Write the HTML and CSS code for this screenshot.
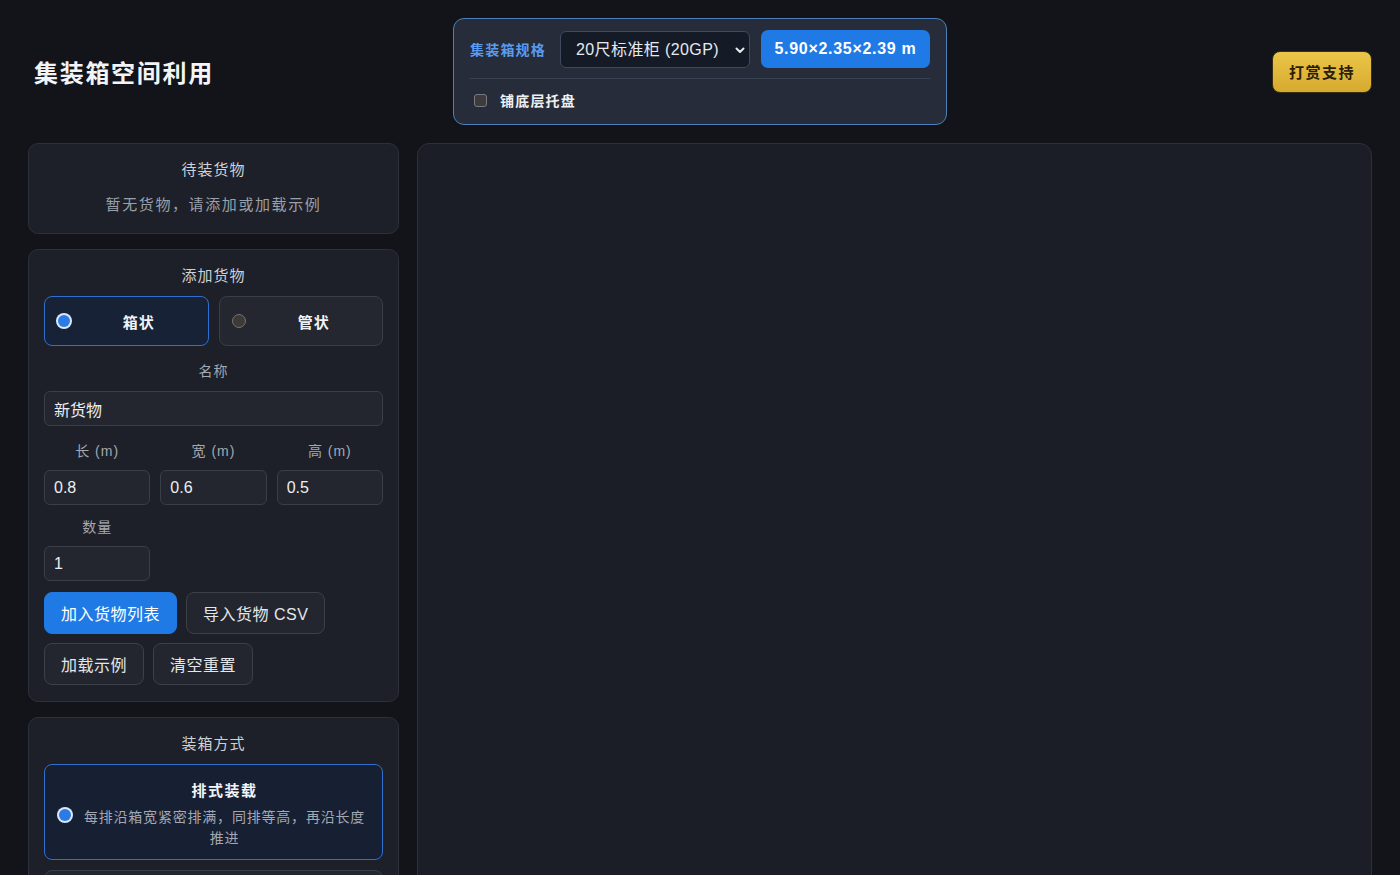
FILE: index.html
```html
<!DOCTYPE html>
<html lang="zh-CN">
<head>
    <meta charset="UTF-8">
    <meta name="viewport" content="width=device-width, initial-scale=1.0">
    <title>集装箱空间利用</title>
    <link rel="stylesheet" href="styles.css">
</head>
<body>
    <header class="top">
        <h1 class="title">集装箱空间利用</h1>

        <div class="spec">
            <div class="spec-row">
                <span class="spec-label">集装箱规格</span>
                <div class="select-wrap">
                    <select class="spec-select">
                        <option>20尺标准柜 (20GP)</option>
                        <option>40尺标准柜 (40GP)</option>
                        <option>40尺高柜 (40HQ)</option>
                    </select>
                    <svg class="chev" width="12" height="12" viewBox="0 0 12 12"><path d="M2.5 4.5 6 8l3.5-3.5" fill="none" stroke="#e6e9ef" stroke-width="2" stroke-linecap="round" stroke-linejoin="round"/></svg>
                </div>
                <span class="spec-size">5.90×2.35×2.39 m</span>
            </div>
            <label class="pallet">
                <span class="check"></span>
                铺底层托盘
            </label>
        </div>

        <div class="top-right">
            <button class="reward">打赏支持</button>
        </div>
    </header>

    <main class="main">
        <aside class="side">
            <section class="panel">
                <h2 class="panel-title">待装货物</h2>
                <p class="empty">暂无货物，请添加或加载示例</p>
            </section>

            <section class="panel">
                <h2 class="panel-title">添加货物</h2>
                <div class="shape-row">
                    <div class="choice active">
                        <span class="radio on"></span>
                        <span class="choice-text">箱状</span>
                    </div>
                    <div class="choice">
                        <span class="radio"></span>
                        <span class="choice-text">管状</span>
                    </div>
                </div>

                <div class="field-label name-label">名称</div>
                <input class="inp" type="text" value="新货物">

                <div class="dims">
                    <div class="dim">
                        <div class="field-label">长 (m)</div>
                        <input class="inp" type="text" value="0.8">
                    </div>
                    <div class="dim">
                        <div class="field-label">宽 (m)</div>
                        <input class="inp" type="text" value="0.6">
                    </div>
                    <div class="dim">
                        <div class="field-label">高 (m)</div>
                        <input class="inp" type="text" value="0.5">
                    </div>
                    <div class="dim">
                        <div class="field-label">数量</div>
                        <input class="inp" type="text" value="1">
                    </div>
                </div>

                <div class="btn-row">
                    <button class="btn primary">加入货物列表</button>
                    <button class="btn">导入货物 CSV</button>
                </div>
                <div class="btn-row">
                    <button class="btn">加载示例</button>
                    <button class="btn">清空重置</button>
                </div>
            </section>

            <section class="panel">
                <h2 class="panel-title">装箱方式</h2>
                <div class="method active">
                    <span class="radio on"></span>
                    <div class="method-text">
                        <div class="method-name">排式装载</div>
                        <div class="method-desc">每排沿箱宽紧密排满，同排等高，再沿长度推进</div>
                    </div>
                </div>
                <div class="method">
                    <span class="radio"></span>
                    <div class="method-text">
                        <div class="method-name">层式装载</div>
                        <div class="method-desc">先铺满底层，再逐层向上堆叠</div>
                    </div>
                </div>
            </section>
        </aside>

        <section class="view"></section>
    </main>
</body>
</html>
```

FILE: styles.css
```css
* {
    box-sizing: border-box;
}

body {
    margin: 0;
    background-color: #121419;
    color: #e6e9ef;
    font-family: "Liberation Sans", "Noto Sans CJK SC", sans-serif;
}

button, input, select {
    font-family: inherit;
}

/* header */
.top {
    display: grid;
    grid-template-columns: 1fr auto 1fr;
    align-items: center;
    padding: 18px 28px 18px;
}

.title {
    margin: 0 0 0 6px;
    font-size: 24px;
    letter-spacing: 1.7px;
    color: #f3f4f7;
}

.spec {
    width: 494px;
    padding: 11px 16px 12px;
    background-color: #262c39;
    border: 1px solid #4f7fb8;
    border-radius: 11px;
}

.spec-row {
    display: flex;
    align-items: center;
    height: 38px;
}

.spec-label {
    color: #5a9bf0;
    font-size: 14px;
    font-weight: bold;
    letter-spacing: 1.2px;
    margin-right: 14px;
}

.select-wrap {
    position: relative;
    width: 190px;
    height: 37px;
    margin-right: 11px;
}

.spec-select {
    appearance: none;
    width: 100%;
    height: 100%;
    padding: 0 0 0 15px;
    background-color: #151b26;
    color: #e6e9ef;
    border: 1px solid #3f4a5d;
    border-radius: 6px;
    font-size: 16px;
    letter-spacing: 0.4px;
}

.chev {
    position: absolute;
    right: 4px;
    top: 13px;
}

.spec-size {
    flex: 1;
    height: 38px;
    line-height: 38px;
    text-align: center;
    background-color: #1f7ae6;
    border-radius: 7px;
    color: #fff;
    font-size: 16px;
    font-weight: bold;
    letter-spacing: 0.7px;
}

.pallet {
    display: flex;
    align-items: center;
    height: 34px;
    margin-top: 10px;
    padding-top: 9px;
    border-top: 1px solid #394253;
    font-size: 14px;
    font-weight: bold;
    letter-spacing: 1.2px;
    color: #eef0f4;
}

.check {
    width: 13px;
    height: 13px;
    margin: 0 13px 0 4px;
    background-color: #3c3c3f;
    border: 1px solid #7a7a7e;
    border-radius: 3px;
}

.top-right {
    display: flex;
    justify-content: flex-end;
}

.reward {
    width: 100px;
    height: 42px;
    background: linear-gradient(180deg, #eac649, #d7a92f);
    border: 1px solid #3a2f10;
    border-radius: 8px;
    color: #2a1f06;
    font-size: 15px;
    font-weight: bold;
    letter-spacing: 1.5px;
    cursor: pointer;
}

/* layout */
.main {
    display: grid;
    grid-template-columns: 371px 1fr;
    gap: 18px;
    padding: 0 28px;
}

.side {
    display: flex;
    flex-direction: column;
    gap: 15px;
}

.panel {
    background-color: #1d2028;
    border: 1px solid #2c3039;
    border-radius: 10px;
    padding: 15px 15px 16px;
}

.panel-title {
    margin: 0;
    font-size: 15px;
    font-weight: normal;
    line-height: 22px;
    letter-spacing: 1px;
    text-align: center;
    color: #cdd1d9;
}

.empty {
    margin: 13px 0 1px;
    font-size: 15px;
    line-height: 22px;
    letter-spacing: 1.6px;
    text-align: center;
    color: #9aa0ab;
}

/* shape choice */
.shape-row {
    display: grid;
    grid-template-columns: 1fr 1fr;
    gap: 10px;
    margin-top: 9px;
}

.choice {
    display: flex;
    align-items: center;
    height: 50px;
    padding-left: 12px;
    background-color: #24272f;
    border: 1px solid #3a3e47;
    border-radius: 8px;
}

.choice.active {
    background-color: #172236;
    border-color: #2f6fd0;
}

.choice-text {
    flex: 1;
    text-align: center;
    font-size: 15px;
    font-weight: bold;
    letter-spacing: 1px;
    color: #f1f3f6;
}

.radio {
    flex: none;
    width: 14px;
    height: 14px;
    border-radius: 50%;
    background-color: #3d3b38;
    border: 1.5px solid #77736d;
}

.radio.on {
    width: 12px;
    height: 12px;
    margin-left: 1px;
    background-color: #2c7be5;
    border: none;
    box-shadow: 0 0 0 2px #dbe7fb;
}

/* fields */
.field-label {
    font-size: 14px;
    line-height: 20px;
    letter-spacing: 1px;
    text-align: center;
    color: #a3a8b2;
    margin-bottom: 9px;
}

.name-label {
    margin-top: 15px;
    margin-bottom: 10px;
}

.inp {
    display: block;
    width: 100%;
    height: 35px;
    padding: 0 9px;
    background-color: #23262e;
    color: #eceef2;
    border: 1px solid #3a3e48;
    border-radius: 6px;
    font-size: 16px;
}

.dims {
    display: grid;
    grid-template-columns: repeat(3, 1fr);
    column-gap: 10px;
    row-gap: 12px;
    margin-top: 15px;
}

/* buttons */
.btn-row {
    display: flex;
    gap: 9px;
    margin-top: 9px;
}

.dims + .btn-row {
    margin-top: 11px;
}

.btn {
    height: 42px;
    padding: 0 16px;
    background-color: #23262e;
    color: #e3e6eb;
    border: 1px solid #3c4049;
    border-radius: 8px;
    font-size: 16px;
    letter-spacing: 0.5px;
    cursor: pointer;
}

.btn.primary {
    background-color: #1f7ae6;
    border-color: #1f7ae6;
    color: #fff;
}

/* method */
.method {
    display: flex;
    align-items: center;
    margin-top: 9px;
    padding: 15px 10px 10px 13px;
    background-color: #24272f;
    border: 1px solid #3a3e47;
    border-radius: 8px;
}

.method.active {
    background-color: #172033;
    border-color: #2f6fd0;
}

.method + .method {
    margin-top: 10px;
}

.method-text {
    flex: 1;
    text-align: center;
    padding-left: 6px;
}

.method-name {
    font-size: 15px;
    font-weight: bold;
    line-height: 22px;
    letter-spacing: 1.5px;
    color: #f3f4f7;
}

.method-desc {
    margin-top: 5px;
    font-size: 14px;
    line-height: 21px;
    letter-spacing: 0.8px;
    color: #a3a8b2;
}

/* 3d view */
.view {
    background-color: #1b1e26;
    border: 1px solid #2c3039;
    border-radius: 12px;
    min-height: 760px;
}
```
